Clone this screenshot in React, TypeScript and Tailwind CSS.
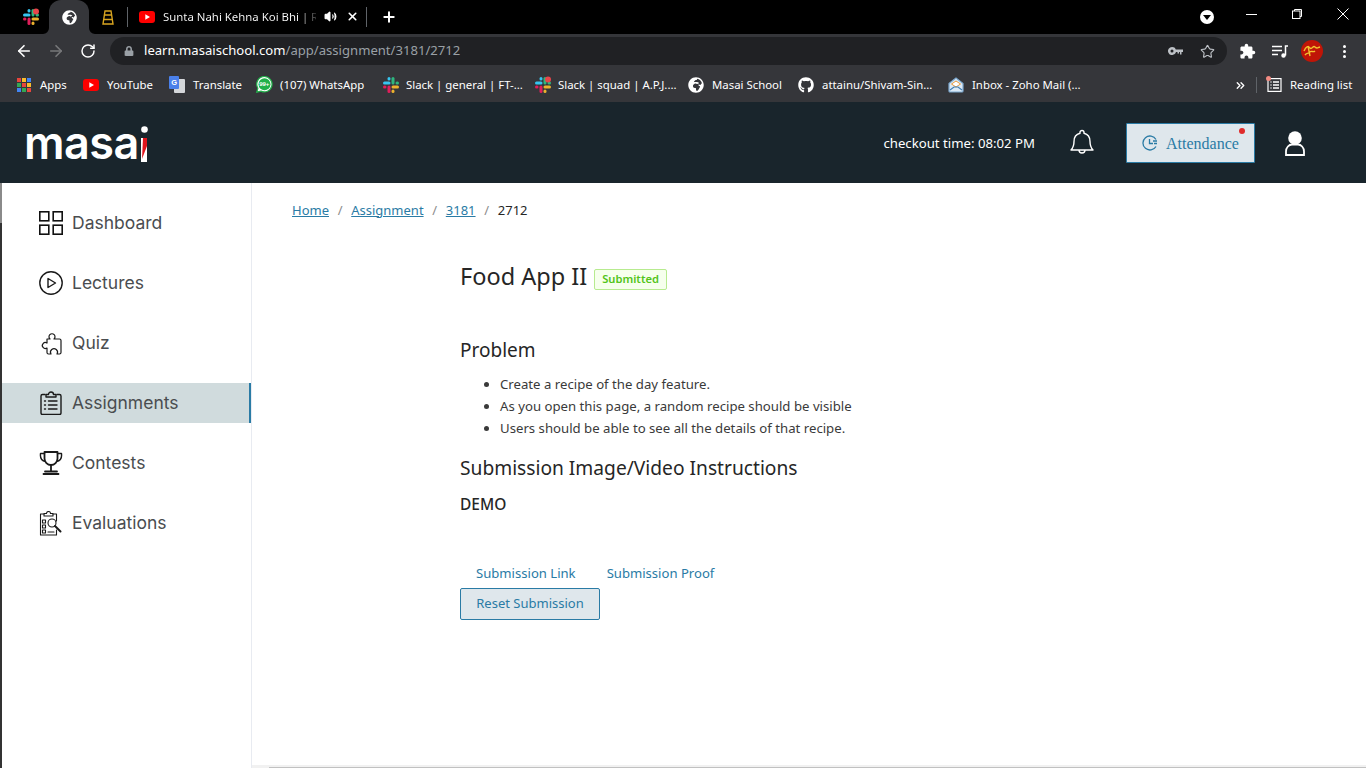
import React from 'react'
import { ArrowLeft, ArrowRight, RotateCw, Star, X, Plus, ChevronsRight, Volume2 } from 'lucide-react'
import { FaGithub, FaGlobeAfrica, FaLock } from 'react-icons/fa'
import { MdExtension } from 'react-icons/md'

const Slack = ({ dot = false }: { dot?: boolean }) => (
  <svg width="18" height="18" viewBox="0 0 18 18" fill="none" strokeWidth="3" strokeLinecap="round" className="shrink-0">
    <path d="M2.500 7H7" stroke="#36c5f0" />
    <path d="M11 2.500V7" stroke="#2eb67d" />
    <path d="M11 11H15.500" stroke="#ecb22e" />
    <path d="M7 11V15.500" stroke="#e01e5a" />
    <path d="M7 2.500V3" stroke="#36c5f0" />
    <path d="M15 7H15.500" stroke="#2eb67d" />
    <path d="M11 15.500V15" stroke="#ecb22e" />
    <path d="M3 11H2.500" stroke="#e01e5a" />
    {dot && <circle cx="14" cy="3.500" r="3" fill="#e8454a" />}
  </svg>
)

const Youtube = () => (
  <svg width="16" height="12" viewBox="0 0 16 12" className="shrink-0">
    <rect width="16" height="12" rx="3" fill="#f00" />
    <path d="M6.300 3.200v5.600L11 6z" fill="#fff" />
  </svg>
)

const AppsGrid = () => {
  const colors = ['#e8453c', '#f9bb2d', '#4285f4', '#34a853', '#e8453c', '#f9bb2d', '#4285f4', '#34a853', '#e8453c']
  return (
    <div className="grid grid-cols-3 gap-px w-[14px] shrink-0">
      {colors.map((c, i) => (
        <span key={i} className="w-[4px] h-[4px]" style={{ background: c }} />
      ))}
    </div>
  )
}

const TranslateIcon = () => (
  <svg width="16" height="17" viewBox="0 0 16 17" className="shrink-0">
    <rect x="5" y="3" width="11" height="14" rx="1" fill="#d5d7da" />
    <rect width="10" height="13" rx="1" fill="#4a80ea" />
    <text x="2.200" y="9" fontSize="7.500" fontWeight="700" fill="#fff" fontFamily="Liberation Sans, sans-serif">G</text>
  </svg>
)

const WhatsappIcon = () => (
  <svg width="17" height="17" viewBox="0 0 17 17" className="shrink-0">
    <path d="M8.500 .5a7.700 7.700 0 0 0-6.600 11.700L.8 16.200l4.100-1.100A7.700 7.700 0 1 0 8.500 .5z" fill="#fff" stroke="#21b14a" strokeWidth="1.200" />
    <circle cx="8.500" cy="8.200" r="6" fill="#21b14a" />
    <text x="3.200" y="10.400" fontSize="6" fontWeight="700" fill="#fff" fontFamily="Liberation Sans, sans-serif">99+</text>
  </svg>
)

const ZohoIcon = () => (
  <svg width="16" height="16" viewBox="0 0 16 16" fill="none" className="shrink-0">
    <path d="M1 6.500 8 1l7 5.500V14a1 1 0 0 1-1 1H2a1 1 0 0 1-1-1z" fill="#dbe9f5" stroke="#7da9cf" strokeWidth="1.200" />
    <path d="M3.500 7 8 4l4.500 3-4.500 3z" fill="#fff" stroke="#e89a3c" />
    <path d="M2 13l4-3h4l4 3" stroke="#3f7fb5" strokeWidth="1.200" />
  </svg>
)

const bookmarks = [
  { w: 'w-[66px]', gap: 'gap-[9px]', icon: <AppsGrid />, label: 'Apps' },
  { w: 'w-[86px]', gap: 'gap-2', icon: <Youtube />, label: 'YouTube' },
  { w: 'w-[87px]', gap: 'gap-2', icon: <TranslateIcon />, label: 'Translate' },
  { w: 'w-[126px]', gap: 'gap-[7px]', icon: <WhatsappIcon />, label: '(107) WhatsApp' },
  { w: 'w-[152px]', gap: 'gap-[6px]', icon: <Slack />, label: 'Slack | general | FT-...' },
  { w: 'w-[154px]', gap: 'gap-[6px]', icon: <Slack dot />, label: 'Slack | squad | A.P.J....' },
  { w: 'w-[110px]', gap: 'gap-2', icon: <FaGlobeAfrica size={16} color="#fff" className="shrink-0" />, label: 'Masai School' },
  { w: 'w-[150px]', gap: 'gap-2', icon: <FaGithub size={16} color="#fff" className="shrink-0" />, label: 'attainu/Shivam-Sin...' },
  { w: 'w-[130px]', gap: 'gap-2', icon: <ZohoIcon />, label: 'Inbox - Zoho Mail (...' },
]

const icon = { fill: 'none', stroke: '#1a1a1a', strokeWidth: 1.400, strokeLinecap: 'round', strokeLinejoin: 'round' } as const

const DashboardIcon = () => (
  <svg width="24" height="24" viewBox="0 0 24 24" fill="none" stroke="#111" strokeWidth="1.600">
    <rect x=".8" y=".8" width="9" height="9" />
    <rect x="14.200" y=".8" width="9" height="9" />
    <rect x=".8" y="14.200" width="9" height="9" />
    <rect x="14.200" y="14.200" width="9" height="9" />
  </svg>
)

const LecturesIcon = () => (
  <svg width="24" height="24" viewBox="0 0 24 24" {...icon}>
    <circle cx="12" cy="12" r="11.200" />
    <path d="M9 7.500v9l7.500-4.500z" />
  </svg>
)

const QuizIcon = () => (
  <svg width="24" height="24" viewBox="0 0 24 24" {...icon} strokeWidth="1.200">
    <path d="M8 8h3a3 3 0 1 1 4 0h5.500A1.500 1.500 0 0 1 22 9.500v12a1.500 1.500 0 0 1-1.500 1.500H18a3.500 3.500 0 1 0-6 0H9.500A1.500 1.500 0 0 1 8 21.500V17a3 3 0 1 1 0-5z" />
  </svg>
)

const AssignmentsIcon = () => (
  <svg width="24" height="24" viewBox="0 0 24 24" {...icon}>
    <path d="M6 3.500H3.500a1.500 1.500 0 0 0-1.500 1.500v17a1.500 1.500 0 0 0 1.500 1.500h17a1.500 1.500 0 0 0 1.500-1.500V5a1.500 1.500 0 0 0-1.500-1.500H18" />
    <path d="M7 6V3.500h2.500a2.500 2.500 0 0 1 5 0H17V6z" />
    <path d="M9.500 10H18M9.500 14H18M9.500 18H18M5.500 10H6.500M5.500 14H6.500M5.500 18H6.500" />
  </svg>
)

const ContestsIcon = () => (
  <svg width="24" height="24" viewBox="0 0 24 24" {...icon}>
    <path d="M5.500 1h13v6.500a6.500 6.500 0 0 1-13 0z" strokeWidth="1.800" />
    <path d="M5.500 2.500H1.500C1 7 3 10 6.500 10.500M18.500 2.500h4c.5 4.500-1.500 7.500-5 8" />
    <path d="M12 14v6M6 20.500h12M4.500 23h15" strokeWidth="1.800" />
  </svg>
)

const EvaluationsIcon = () => (
  <svg width="24" height="25" viewBox="0 0 24 25" {...icon} strokeWidth="1.100">
    <path d="M5 3H1.500v21h16v-5M14 3h3.500v7" />
    <path d="M5 5V2.500h2.500a2 2 0 0 1 4 0H14V5z" />
    <circle cx="13" cy="12" r="4" />
    <path d="M16 15l5.500 5.500" strokeWidth="2" />
    <path d="M3.500 9h3v3h-3zM3.500 14h3v3h-3zM3.500 19h3v3h-3zM9 21h6" />
  </svg>
)

const nav = [
  { label: 'Dashboard', icon: <DashboardIcon /> },
  { label: 'Lectures', icon: <LecturesIcon /> },
  { label: 'Quiz', icon: <QuizIcon /> },
  { label: 'Assignments', icon: <AssignmentsIcon />, active: true },
  { label: 'Contests', icon: <ContestsIcon /> },
  { label: 'Evaluations', icon: <EvaluationsIcon /> },
]

const App = () => {
  return (
    <div className="h-screen w-full overflow-hidden flex flex-col bg-white font-['Noto_Sans',sans-serif]">
      {/* Tab strip */}
      <div className="h-[34px] bg-black flex items-center pl-[2px] shrink-0">
        <div className="w-[47px] flex justify-center pl-[10px]">
          <Slack dot />
        </div>
        <div className="relative w-[40px] h-[34px] bg-[#35363a] rounded-t-xl flex items-center justify-center">
          <FaGlobeAfrica size={15} color="#fff" />
          {/* flared bottom corners of the active tab */}
          <svg width="6" height="6" viewBox="0 0 6 6" className="absolute -left-[6px] bottom-0" fill="#35363a">
            <path d="M6 0v6H0a6 6 0 0 0 6-6z" />
          </svg>
          <svg width="6" height="6" viewBox="0 0 6 6" className="absolute -right-[6px] bottom-0" fill="#35363a">
            <path d="M0 0v6h6a6 6 0 0 1-6-6z" />
          </svg>
        </div>
        <div className="w-[38px] flex justify-center">
          <svg width="12" height="15" viewBox="0 0 12 15" fill="none" stroke="#d9a520" strokeWidth="1.400">
            <path d="M3 1h6l2 13H1zM2.500 5h7M2 9.500h8" />
          </svg>
        </div>
        <div className="w-px h-5 bg-[#5f6368]" />
        <div className="w-[238px] flex items-center pl-[11px]">
          <Youtube />
          <span className="ml-2 w-[153px] whitespace-nowrap text-[11.400px] bg-linear-to-r from-white from-88% to-white/20 to-100% bg-clip-text text-transparent">Sunta Nahi Kehna Koi Bhi | R</span>
          <Volume2 size={13} color="#fff" fill="#fff" className="ml-[8px]" />
          <X size={13} color="#fff" strokeWidth={3} className="ml-[9px]" />
        </div>
        <div className="w-px h-5 bg-[#5f6368]" />
        <Plus size={16} color="#fff" strokeWidth={3} className="ml-[14px]" />
        <div className="ml-auto flex items-center">
          <div className="w-[14px] h-[14px] rounded-full bg-white flex items-center justify-center">
            <div className="w-0 h-0 border-x-[4px] border-x-transparent border-t-[5px] border-t-black" />
          </div>
          <div className="w-[46px] ml-[14px] flex justify-center -mt-[6px]">
            <div className="w-[11px] h-px bg-white" />
          </div>
          <div className="w-[46px] flex justify-center -mt-[6px]">
            <svg width="10" height="10" viewBox="0 0 10 10" fill="none" stroke="#fff" strokeWidth="1">
              <rect x=".5" y="2" width="7.500" height="7.500" />
              <path d="M2.500 2V.5h7v7H8" />
            </svg>
          </div>
          <div className="w-[46px] flex justify-center -mt-[6px]">
            <svg width="12" height="12" viewBox="0 0 12 12" stroke="#fff" strokeWidth="1">
              <path d="M.5 .5l11 11M11.500 .5l-11 11" />
            </svg>
          </div>
        </div>
      </div>

      {/* Toolbar */}
      <div className="h-[34px] bg-[#35363a] flex items-center shrink-0">
        <ArrowLeft size={18} color="#fff" strokeWidth={2.200} className="ml-[15px]" />
        <ArrowRight size={18} color="#77787a" strokeWidth={2.200} className="ml-[14px]" />
        <RotateCw size={16} color="#fff" strokeWidth={2.200} className="ml-[15px]" />
        <div className="ml-[14px] w-[1117px] h-[28px] rounded-full bg-[#202124] flex items-center pl-[14px] pr-[12px]">
          <FaLock size={10} color="#9aa0a6" />
          <span className="ml-[10px] text-[13.100px] text-white">learn.masaischool.com</span>
          <span className="text-[13.100px] text-[#9aa0a6]">/app/assignment/3181/2712</span>
          <svg width="15" height="8" viewBox="0 0 15 8" className="ml-auto" fill="#bdc1c6">
            <path d="M4 0a4 4 0 1 1-3.700 5.500A4 4 0 0 1 4 0zm0 2.500a1.500 1.500 0 1 0 0 3 1.500 1.500 0 0 0 0-3zM7.500 2.500H15V5h-1.500v2.500H12V5h-1v1.500H9.500V5h-2z" />
          </svg>
          <Star size={15} color="#bdc1c6" strokeWidth={1.800} className="ml-[17px]" />
        </div>
        <MdExtension size={17} color="#fff" className="ml-[12px]" />
        <svg width="16" height="13" viewBox="0 0 16 13" className="ml-[16px]" fill="none" stroke="#fff" strokeWidth="1.500">
          <path d="M0 1.500h10M0 5.500h10M0 9.500h6" />
          <path d="M13.500 10.500V1h2.500" />
          <circle cx="11.500" cy="10.500" r="1.500" fill="#fff" />
        </svg>
        <div className="ml-[13px] w-[22px] h-[22px] rounded-full bg-[#c01507] flex items-center justify-center">
          <svg width="18" height="14" viewBox="0 0 18 14" fill="none" stroke="#f2c230" strokeWidth="1.400">
            <path d="M1 7c2-5 4-5 6-3s3-3 5-1 2 1 5 0M2 11c2-3 4-1 5-3s3 1 5-1M5 2l2 10" />
          </svg>
        </div>
        <div className="ml-[20px] flex flex-col gap-[2px]">
          <span className="w-[3px] h-[3px] rounded-full bg-white" />
          <span className="w-[3px] h-[3px] rounded-full bg-white" />
          <span className="w-[3px] h-[3px] rounded-full bg-white" />
        </div>
      </div>

      {/* Bookmarks */}
      <div className="h-[34px] bg-[#35363a] flex items-center pl-[17px] shrink-0 text-[11.400px] text-white">
        {bookmarks.map(b => (
          <div key={b.label} className={`${b.w} ${b.gap} flex items-center shrink-0 whitespace-nowrap`}>
            {b.icon}
            <span>{b.label}</span>
          </div>
        ))}
        <ChevronsRight size={13} color="#fff" strokeWidth={2.500} className="ml-[156px]" />
        <div className="ml-[9px] w-px h-[16px] bg-[#5f6368]" />
        <div className="ml-[10px] relative">
          <svg width="15" height="14" viewBox="0 0 15 14" fill="none" stroke="#fff" strokeWidth="1.200">
            <rect x="1" y=".6" width="13" height="12.800" />
            <path d="M3.500 4h1M3.500 7h1M3.500 10h1M6 4h6M6 7h6M6 10h6" strokeWidth="1.500" />
          </svg>
          <span className="absolute -left-[1px] -top-[2px] w-[5px] h-[5px] rounded-full bg-[#f28b82]" />
        </div>
        <span className="ml-[8px] whitespace-nowrap">Reading list</span>
      </div>

      {/* Site header */}
      <header className="h-[81px] bg-[#19252c] flex items-center pl-[24px] shrink-0">
        <div className="flex items-end h-[44px] text-white font-['Inter',sans-serif] font-semibold text-[45px] leading-[44px] tracking-[-0.5px] -mt-[1px]">
          <span className="-mb-[1px]">masa</span>
          <svg width="7" height="36" viewBox="0 0 7 36" className="ml-[2px] mb-[2px]">
            <circle cx="3.500" cy="3.500" r="3.300" fill="#fff" />
            <rect y="12" width="6" height="24" fill="#fff" />
            <path d="M2 12h4v8L1 33z" fill="#e0141c" />
          </svg>
        </div>
        <span className="ml-auto mt-[3px] text-[13.200px] text-white">checkout time: 08:02 PM</span>
        <svg width="24" height="27" viewBox="0 0 24 27" className="ml-[35px]" fill="none" stroke="#fff" strokeWidth="1.400">
          <path d="M12 1.500a2 2 0 0 1 2 2v.8c4 1 6 4.300 6 8.200 0 4 .7 6 3 8.500H1c2.300-2.500 3-4.500 3-8.500 0-3.900 2-7.200 6-8.200v-.8a2 2 0 0 1 2-2z" strokeLinejoin="round" />
          <path d="M9 21a3 3 0 0 0 6 0" />
        </svg>
        <button className="relative ml-[32px] w-[129px] h-[40px] bg-[#dfe7ec] border border-[#2a7ba5] rounded-[1px] flex items-center pl-[15px] text-[#2a7ba5] text-[16px] font-['Liberation_Serif',serif]">
          <svg width="16" height="16" viewBox="0 0 16 16" fill="none" stroke="#2a7ba5" strokeWidth="1.300" className="mr-[8px] shrink-0">
            <path d="M14 4.500A7 7 0 1 0 14 11.500M7.500 4v4.500H11M11 6h4M12 8.500h3" />
          </svg>
          <span className="mt-[2px]">Attendance</span>
          <span className="absolute right-[9px] top-[4px] w-[6px] h-[6px] rounded-full bg-[#e02b2b]" />
        </button>
        <svg width="20" height="25" viewBox="0 0 20 25" className="ml-[30px] mr-[61px] mt-[2px]" fill="none">
          <circle cx="10" cy="7" r="6.800" fill="#fff" />
          <path d="M1 24v-3.500C1 16.500 4 13.500 7 13.500h6c3 0 6 3 6 7V24z" stroke="#fff" strokeWidth="1.800" />
        </svg>
      </header>

      {/* Body */}
      <div className="flex-1 min-h-0 flex">
        <div className="w-[2px] flex flex-col shrink-0">
          <div className="h-[40px] bg-[#8a8a8a]" />
          <div className="flex-1 bg-[#333]" />
        </div>
        <aside className="w-[250px] shrink-0 border-r border-[#e8ebf1] pt-[20px] flex flex-col gap-[20px] font-['Inter',sans-serif]">
          {nav.map(n => (
            <div key={n.label} className={`h-[40px] shrink-0 flex items-center pl-[37px] ${n.active ? 'bg-[#d0dbdd] border-r-2 border-[#2a7ba5]' : ''}`}>
              <span className="w-[24px] flex justify-center">{n.icon}</span>
              <span className="ml-[9px] text-[17.500px] text-[#4a4d50]">{n.label}</span>
            </div>
          ))}
        </aside>
        <main className="flex-1 min-w-0 flex flex-col text-[#262626]">
          <nav className="pl-[40px] pt-[18px] flex items-center text-[13px] h-[37px]">
            <a className="text-[#2a7ba5] underline">Home</a>
            <span className="mx-[8.700px] text-[#8c8c8c]">/</span>
            <a className="text-[#2a7ba5] underline">Assignment</a>
            <span className="mx-[8.700px] text-[#8c8c8c]">/</span>
            <a className="text-[#2a7ba5] underline">3181</a>
            <span className="mx-[8.700px] text-[#8c8c8c]">/</span>
            <span>2712</span>
          </nav>
          <div className="ml-[208px] flex-1">
            <div className="mt-[39px] flex items-center h-[34px]">
              <h1 className="text-[23.500px] leading-[34px] whitespace-nowrap">Food App II</h1>
              <span className="ml-[7px] mt-[7px] px-[7px] h-[21px] flex items-center border border-[#b7eb8f] bg-[#f6ffed] text-[#52c41a] text-[11.200px] font-semibold rounded-[2px]">Submitted</span>
            </div>
            <h2 className="mt-[42px] text-[19px] leading-[30px]">Problem</h2>
            <ul className="mt-[8px] list-disc pl-[40px] text-[13.200px] leading-[22px] text-[#3a3a3a]">
              <li>Create a recipe of the day feature.</li>
              <li>As you open this page, a random recipe should be visible</li>
              <li>Users should be able to see all the details of that recipe.</li>
            </ul>
            <h2 className="mt-[14px] text-[19.200px] leading-[30px]">Submission Image/Video Instructions</h2>
            <p className="mt-[10px] text-[15.500px] leading-[22px] font-medium">DEMO</p>
            <div className="mt-[47px] pl-[16px] flex text-[#2a7ba5] text-[13.100px] leading-[22px]">
              <a>Submission Link</a>
              <a className="ml-[31px]">Submission Proof</a>
            </div>
            <button className="mt-[4px] block w-[140px] h-[32px] bg-[#dfe7ec] border border-[#2a7ba5] rounded-[2px] text-[#2a7ba5] text-[13px]">Reset Submission</button>
          </div>
          <div className="h-[3px] bg-[#f1f1f1] pl-[17px] pt-[2px] shrink-0">
            <div className="h-full bg-[#c1c1c1]" />
          </div>
        </main>
      </div>
    </div>
  )
}

export default App
